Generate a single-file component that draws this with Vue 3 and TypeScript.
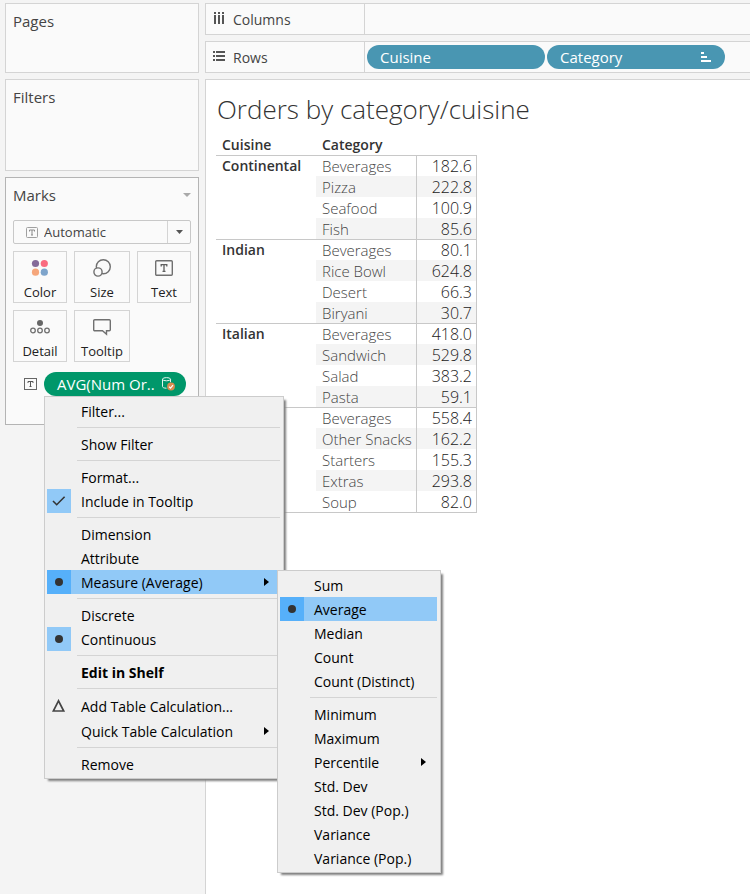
<script setup lang="ts">
import { ref } from 'vue'

interface MenuEntry {
  label?: string
  separator?: boolean
  mark?: 'check' | 'dot' | 'delta'
  active?: boolean
  bold?: boolean
  tall?: boolean
  arrow?: boolean
  children?: MenuEntry[]
}

interface Group {
  cuisine: string
  rows: [string, string][]
}

const markType = ref('Automatic')

const groups: Group[] = [
  { cuisine: 'Continental', rows: [['Beverages', '182.6'], ['Pizza', '222.8'], ['Seafood', '100.9'], ['Fish', '85.6']] },
  { cuisine: 'Indian', rows: [['Beverages', '80.1'], ['Rice Bowl', '624.8'], ['Desert', '66.3'], ['Biryani', '30.7']] },
  { cuisine: 'Italian', rows: [['Beverages', '418.0'], ['Sandwich', '529.8'], ['Salad', '383.2'], ['Pasta', '59.1']] },
  { cuisine: '', rows: [['Beverages', '558.4'], ['Other Snacks', '162.2'], ['Starters', '155.3'], ['Extras', '293.8'], ['Soup', '82.0']] },
]

const menu: MenuEntry[] = [
  { label: 'Filter...' },
  { separator: true },
  { label: 'Show Filter' },
  { separator: true },
  { label: 'Format...' },
  { label: 'Include in Tooltip', mark: 'check' },
  { separator: true },
  { label: 'Dimension' },
  { label: 'Attribute' },
  {
    label: 'Measure (Average)',
    mark: 'dot',
    active: true,
    arrow: true,
    children: [
      { label: 'Sum' },
      { label: 'Average', mark: 'dot', active: true },
      { label: 'Median' },
      { label: 'Count' },
      { label: 'Count (Distinct)' },
      { separator: true },
      { label: 'Minimum' },
      { label: 'Maximum' },
      { label: 'Percentile', arrow: true },
      { label: 'Std. Dev' },
      { label: 'Std. Dev (Pop.)' },
      { label: 'Variance' },
      { label: 'Variance (Pop.)' },
    ],
  },
  { separator: true },
  { label: 'Discrete' },
  { label: 'Continuous', mark: 'dot' },
  { separator: true },
  { label: 'Edit in Shelf', bold: true },
  { separator: true },
  { label: 'Add Table Calculation...', mark: 'delta', tall: true },
  { label: 'Quick Table Calculation', arrow: true, tall: true },
  { separator: true },
  { label: 'Remove' },
]
</script>

<template>
  <div class="workbook">
    <aside class="cards">
      <section class="card pages"><h2>Pages</h2></section>
      <section class="card filters"><h2>Filters</h2></section>
      <section class="card marks">
        <header class="marks-head">
          <h2>Marks</h2>
          <svg width="8" height="4" viewBox="0 0 8 4"><path d="M0 0h8L4 4z" fill="#a9a9a9" /></svg>
        </header>

        <div class="mark-type">
          <svg class="type-icon" width="12" height="11" viewBox="0 0 12 11">
            <rect x=".5" y=".5" width="11" height="10" rx="1" fill="none" stroke="#a0a0a0" />
            <path d="M3.5 4.500V3h5v1.500M6 3v5M5 8h2" fill="none" stroke="#8c8c8c" />
          </svg>
          <select v-model="markType" aria-label="Mark type">
            <option>Automatic</option>
          </select>
          <span class="type-caret">
            <svg width="7" height="4" viewBox="0 0 7 4"><path d="M0 0h7L3.5 4z" fill="#555" /></svg>
          </span>
        </div>

        <div class="mark-buttons">
          <button type="button">
            <svg width="18" height="18" viewBox="0 0 18 18">
              <circle cx="4.5" cy="4.5" r="3.6" fill="#856b99" />
              <circle cx="13.3" cy="4.5" r="3.6" fill="#fa6b80" />
              <circle cx="4.5" cy="13.2" r="3.6" fill="#f5a67b" />
              <circle cx="13.3" cy="13.2" r="3.6" fill="#7ea4cb" />
            </svg>
            Color
          </button>
          <button type="button">
            <svg width="18" height="18" viewBox="0 0 18 18" fill="#fafafa" stroke="#707070" stroke-width="1.4">
              <circle cx="10.3" cy="7.700" r="7" />
              <circle cx="5" cy="13" r="4.100" />
            </svg>
            Size
          </button>
          <button type="button">
            <svg width="18" height="18" viewBox="0 0 18 18">
              <rect x=".7" y="1.7" width="16.6" height="14.6" rx="1" fill="none" stroke="#707070" stroke-width="1.4" />
              <path d="M6.2 7.600V5.600h5.600v2M9 5.600v7M7.500 12.400h3" fill="none" stroke="#606060" stroke-width="1.3" />
            </svg>
            Text
          </button>
          <button type="button">
            <svg width="20" height="18" viewBox="0 0 20 18">
              <circle cx="10" cy="5" r="3" fill="#666" />
              <g fill="none" stroke="#707070" stroke-width="1.300">
                <circle cx="3" cy="12.500" r="2.300" />
                <circle cx="10" cy="12.500" r="2.300" />
                <circle cx="17" cy="12.500" r="2.300" />
              </g>
            </svg>
            Detail
          </button>
          <button type="button">
            <svg width="18" height="18" viewBox="0 0 18 18" fill="none" stroke="#707070" stroke-width="1.400">
              <path d="M1.700 1.700h14.600a1 1 0 0 1 1 1v9a1 1 0 0 1-1 1h-2.800v3.600l-4-3.600H1.700a1 1 0 0 1-1-1v-9a1 1 0 0 1 1-1z" />
            </svg>
            Tooltip
          </button>
        </div>

        <div class="mark-row">
          <svg width="13" height="12" viewBox="0 0 13 12">
            <rect x=".5" y=".5" width="12" height="11" fill="none" stroke="#666" />
            <path d="M4 5V3.500h5V5M6.500 3.500v5M5.500 8.500h2" fill="none" stroke="#555" />
          </svg>
          <button type="button" class="pill measure" aria-haspopup="menu">
            <span>AVG(Num Or..</span>
            <svg width="13" height="14" viewBox="0 0 13 14">
              <g fill="none" stroke="#e4f4ee">
                <ellipse cx="4.500" cy="2.200" rx="4" ry="1.600" />
                <path d="M.5 2.200v7.300c0 1 1.500 1.700 4 1.700M8.500 2.200v3" />
              </g>
              <circle cx="9" cy="9.500" r="3.900" fill="#d98c4f" />
              <path d="M7 9.600l1.500 1.500L11 8.200" fill="none" stroke="#fff" stroke-width="1.200" />
            </svg>
          </button>

          <div class="menu context" role="menu">
            <template v-for="(item, i) in menu" :key="i">
              <hr v-if="item.separator" />
              <div v-else class="item-wrap">
                <button type="button" role="menuitem" class="item" :class="{ active: item.active, bold: item.bold, tall: item.tall }">
                  <span class="gutter" :class="item.mark">
                    <svg v-if="item.mark === 'check'" width="14" height="10" viewBox="0 0 14 10"><path d="M1 5l3.700 3.700L12.600.8" fill="none" stroke="#333" stroke-width="1.600" /></svg>
                    <svg v-else-if="item.mark === 'dot'" width="8" height="8" viewBox="0 0 8 8"><circle cx="4" cy="4" r="4" fill="#333" /></svg>
                    <svg v-else-if="item.mark === 'delta'" width="14" height="14" viewBox="0 0 14 14"><path d="M6.500 1.800L1.300 12h10.400z" fill="none" stroke="#444" stroke-width="1.700" /></svg>
                  </span>
                  <span class="label">{{ item.label }}</span>
                  <svg v-if="item.arrow" class="arrow" width="5" height="8" viewBox="0 0 5 8"><path d="M0 0l5 4-5 4z" /></svg>
                </button>
                <div v-if="item.children" class="menu submenu" role="menu">
                  <template v-for="(sub, j) in item.children" :key="j">
                    <hr v-if="sub.separator" />
                    <button v-else type="button" role="menuitem" class="item" :class="{ active: sub.active }">
                      <span class="gutter" :class="sub.mark">
                        <svg v-if="sub.mark === 'dot'" width="8" height="8" viewBox="0 0 8 8"><circle cx="4" cy="4" r="4" fill="#333" /></svg>
                      </span>
                      <span class="label">{{ sub.label }}</span>
                      <svg v-if="sub.arrow" class="arrow" width="5" height="8" viewBox="0 0 5 8"><path d="M0 0l5 4-5 4z" /></svg>
                    </button>
                  </template>
                </div>
              </div>
            </template>
          </div>
        </div>
      </section>
    </aside>

    <main class="main">
      <section class="shelf">
        <div class="shelf-label">
          <svg width="12" height="14" viewBox="0 0 12 14" fill="#555">
            <path d="M1 0h2v2H1zM5 0h2v2H5zM9 0h2v2H9zM1 3h2v9H1zM5 3h2v9H5zM9 3h2v9H9z" />
          </svg>
          <span>Columns</span>
        </div>
        <div class="shelf-pills"></div>
      </section>
      <section class="shelf">
        <div class="shelf-label">
          <svg width="12" height="14" viewBox="0 0 12 14" fill="#555">
            <path d="M0 1h2v2H0zM0 5h2v2H0zM0 9h2v2H0zM3 1h9v2H3zM3 5h9v2H3zM3 9h9v2H3z" />
          </svg>
          <span>Rows</span>
        </div>
        <div class="shelf-pills">
          <button type="button" class="pill dimension"><span>Cuisine</span></button>
          <button type="button" class="pill dimension">
            <span>Category</span>
            <svg width="11" height="10" viewBox="0 0 11 10" fill="#fff"><path d="M0 0h3v2H0zM0 4h6v2H0zM0 8h10v2H0z" /></svg>
          </button>
        </div>
      </section>

      <section class="sheet">
        <h1>Orders by category/cuisine</h1>
        <table>
          <colgroup>
            <col class="col-cuisine" />
            <col class="col-category" />
            <col class="col-value" />
          </colgroup>
          <thead>
            <tr><th scope="col">Cuisine</th><th scope="col">Category</th><td></td></tr>
          </thead>
          <tbody v-for="(group, g) in groups" :key="g">
            <tr v-for="(row, r) in group.rows" :key="r">
              <th v-if="r === 0" scope="rowgroup" :rowspan="group.rows.length">{{ group.cuisine }}</th>
              <td class="category">{{ row[0] }}</td>
              <td class="value">{{ row[1] }}</td>
            </tr>
          </tbody>
        </table>
      </section>
    </main>
  </div>
</template>

<style>
body {
  margin: 0;
  background: #f4f4f4;
}
</style>

<style scoped>
.workbook {
  display: flex;
  gap: 6px;
  box-sizing: border-box;
  min-height: 100vh;
  padding: 3px 0 0 5px;
  overflow: hidden;
  font-family: "Open Sans", "Noto Sans", sans-serif;
  font-size: 14px;
  color: #333;
}
.workbook *,
.workbook *::before {
  box-sizing: border-box;
}
button,
select {
  margin: 0;
  font: inherit;
  color: inherit;
}
svg {
  flex: none;
}
h1,
h2 {
  margin: 0;
  font-weight: 400;
}
.cards {
  display: flex;
  flex-direction: column;
  gap: 6px;
  flex: none;
  width: 194px;
}
.card {
  padding: 7px;
  border: 1px solid #d4d4d4;
  background: #fafafa;
}
.card h2 {
  font-size: 15px;
  line-height: 20px;
  color: #444;
}
.pages {
  min-height: 70px;
}
.filters {
  min-height: 92px;
}
.marks {
  min-height: 248px;
  border-color: #b4b4b4;
}
.marks-head {
  display: flex;
  align-items: center;
  justify-content: space-between;
}
.mark-type {
  display: flex;
  align-items: center;
  position: relative;
  height: 24px;
  margin-top: 15px;
  border: 1px solid #c8c8c8;
  border-radius: 2px;
}
.type-icon {
  position: absolute;
  left: 12px;
  pointer-events: none;
}
.mark-type select {
  flex: 1;
  height: 22px;
  padding: 0 0 0 30px;
  border: 0;
  background: none;
  appearance: none;
  font-size: 13px;
  color: #444;
}
.type-caret {
  display: flex;
  align-items: center;
  justify-content: center;
  width: 23px;
  height: 22px;
  border-left: 1px solid #d4d4d4;
}
.mark-buttons {
  display: grid;
  grid-template-columns: 54fr 56fr 54fr;
  gap: 7px;
  margin-top: 7px;
}
.mark-buttons button {
  display: flex;
  flex-direction: column;
  align-items: center;
  justify-content: space-between;
  height: 52px;
  padding: 7px 0 0;
  border: 1px solid #d4d4d4;
  background: #fafafa;
  font-size: 13px;
  line-height: 20px;
  color: #222;
}
.mark-row {
  display: flex;
  align-items: center;
  gap: 7px;
  position: relative;
  margin-top: 10px;
  padding: 0 5px 0 11px;
}
.pill {
  display: flex;
  align-items: center;
  justify-content: space-between;
  height: 24px;
  padding: 0 13px;
  border: 0;
  border-radius: 12px;
  color: #fff;
  font-size: 15px;
  font-weight: 500;
  white-space: nowrap;
}
.measure {
  flex: 1;
  padding-right: 11px;
  background: #00976a;
}
.dimension {
  flex: 0 1 178px;
  background: #4996b2;
}
.menu {
  position: absolute;
  z-index: 1;
  padding: 2px 3px 2px 2px;
  border: 1px solid #ccc;
  background: #f0f0f0;
  box-shadow: 3px 3px 2px -1px #808080;
  font-size: 14px;
  color: #000;
}
.context {
  top: 24px;
  left: 31px;
  width: 240px;
}
.submenu {
  top: 0;
  left: 230px;
  width: 164px;
}
.menu hr {
  height: 1px;
  margin: 4px 0 4px 30px;
  border: 0;
  background: #d4d4d4;
}
.item-wrap {
  position: relative;
}
.item {
  display: flex;
  align-items: center;
  width: 100%;
  height: 24px;
  padding: 0 11px 0 0;
  border: 0;
  background: none;
  text-align: left;
  white-space: nowrap;
}
.item.tall {
  height: 25px;
  padding-top: 1px;
}
.item.bold {
  font-weight: 700;
}
.item.active {
  background: #91c9f7;
}
.gutter {
  display: flex;
  align-items: center;
  justify-content: center;
  flex: none;
  width: 24px;
  height: 24px;
  margin-right: 10px;
}
.gutter.check,
.gutter.dot {
  background: #91c9f7;
}
.active .gutter.dot {
  background: #56b0fa;
}
.label {
  flex: 1;
}
.main {
  display: flex;
  flex-direction: column;
  gap: 6px;
  flex: 1;
  min-width: 0;
}
.shelf {
  display: flex;
  height: 32px;
  border: 1px solid #d4d4d4;
  border-right: 0;
  background: #fafafa;
}
.shelf-label {
  display: flex;
  align-items: center;
  gap: 8px;
  flex: none;
  width: 159px;
  padding-left: 7px;
  border-right: 1px solid #d4d4d4;
  color: #444;
}
.shelf-pills {
  display: flex;
  align-items: center;
  gap: 2px;
  flex: 1;
  padding-left: 2px;
}
.sheet {
  flex: 1;
  padding: 12px 10px;
  border: 1px solid #d4d4d4;
  border-width: 1px 0 0 1px;
  background: #fff;
}
h1 {
  padding-left: 1px;
  font-size: 26px;
  line-height: 34px;
  font-weight: 300;
}
table {
  width: 261px;
  margin-top: 8px;
  border-collapse: separate;
  border-spacing: 0;
  table-layout: fixed;
}
.col-cuisine {
  width: 100px;
}
.col-category {
  width: 101px;
}
.col-value {
  width: 60px;
}
th,
td {
  height: 21px;
  padding: 1px 0 0 6px;
  line-height: 20px;
  text-align: left;
  vertical-align: top;
  white-space: nowrap;
}
th {
  font-weight: 600;
}
td.category {
  border-right: 1px solid #c8c8c8;
  font-size: 15px;
  font-weight: 300;
  color: #444;
}
td.value {
  padding-right: 4px;
  border-right: 1px solid #c8c8c8;
  font-size: 16px;
  font-weight: 300;
  color: #222;
  text-align: right;
}
tbody tr:first-child > * {
  padding-top: 0;
  border-top: 1px solid #c8c8c8;
}
tbody:last-child tr:last-child > td,
tbody:last-child th {
  height: 22px;
  border-bottom: 1px solid #c8c8c8;
}
tbody tr:nth-child(even) td {
  background: #f4f4f4;
}
</style>
